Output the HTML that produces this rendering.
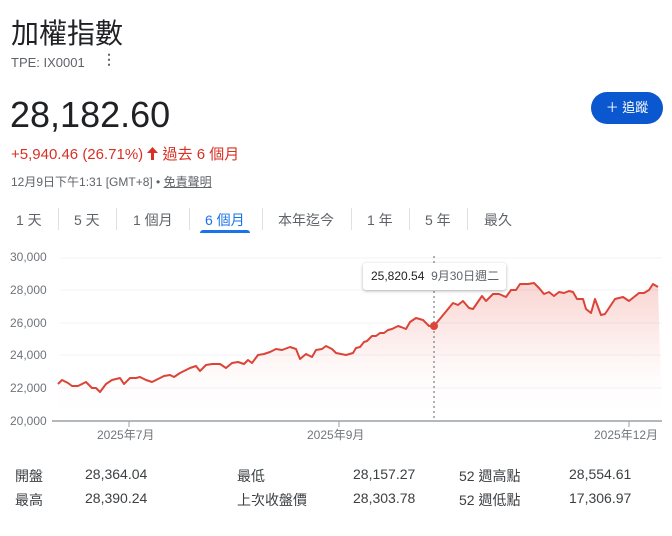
<!DOCTYPE html><html><head><meta charset="utf-8"><style>
body{margin:0;width:672px;height:536px;background:#fff;font-family:"Liberation Sans","Noto Sans CJK TC",sans-serif;color:#202124;position:relative;overflow:hidden}
.a{position:absolute;white-space:nowrap}
.tab{position:absolute;top:210px;font-size:14px;color:#5f6368}
.sep{position:absolute;top:208px;width:1px;height:22px;background:#e0e0e0}
.st{position:absolute;font-size:14px;color:#3c4043}
.yl{position:absolute;left:10px;font-size:12px;color:#70757a}
</style></head><body>
<div class="a" style="left:11px;top:12px;font-size:28px;color:#202124">加權指數</div>
<div class="a" style="left:11px;top:55px;font-size:13px;color:#5f6368">TPE: IX0001</div>
<div class="a" style="left:102px;top:54px;font-size:14px;font-weight:bold;color:#5f6368;line-height:10px">⋮</div>
<div class="a" style="left:10px;top:94px;font-size:36px;color:#202124">28,182.60</div>
<div class="a" style="left:11px;top:143px;font-size:15px;color:#d93025">+5,940.46 (26.71%) <svg width="11" height="13" viewBox="0 0 11 13" style="vertical-align:-1px"><path d="M5.5 0 L11 6 L7 6 L7 13 L4 13 L4 6 L0 6 Z" fill="#d93025"/></svg> 過去 6 個月</div>
<div class="a" style="left:11px;top:173px;font-size:12px;color:#5f6368">12月9日下午1:31 [GMT+8] • <span style="text-decoration:underline">免責聲明</span></div>
<div class="a" style="left:591px;top:92px;width:72px;height:32px;border-radius:16px;background:#0b57d0;color:#fff;font-size:13px;line-height:32px;text-align:center">＋ 追蹤</div>
<div class="tab" style="left:16px">1 天</div>
<div class="sep" style="left:58px"></div>
<div class="tab" style="left:74px">5 天</div>
<div class="sep" style="left:116px"></div>
<div class="tab" style="left:133px">1 個月</div>
<div class="sep" style="left:189px"></div>
<div class="tab" style="left:205px;color:#1a73e8">6 個月</div>
<div class="a" style="left:200px;top:230px;width:50px;height:3px;background:#1a73e8;border-radius:3px 3px 0 0"></div>
<div class="sep" style="left:262px"></div>
<div class="tab" style="left:278px">本年迄今</div>
<div class="sep" style="left:351px"></div>
<div class="tab" style="left:367px">1 年</div>
<div class="sep" style="left:409px"></div>
<div class="tab" style="left:425px">5 年</div>
<div class="sep" style="left:467px"></div>
<div class="tab" style="left:484px">最久</div>
<div class="yl" style="top:250px">30,000</div>
<div class="yl" style="top:283px">28,000</div>
<div class="yl" style="top:316px">26,000</div>
<div class="yl" style="top:348px">24,000</div>
<div class="yl" style="top:381px">22,000</div>
<div class="yl" style="top:414px">20,000</div>
<svg class="a" style="left:0;top:0" width="672" height="536">
<defs><linearGradient id="g" x1="0" y1="0" x2="0" y2="1"><stop offset="0" stop-color="#e8594d" stop-opacity="0.25"/><stop offset="0.6" stop-color="#e8594d" stop-opacity="0.04"/><stop offset="1" stop-color="#fff" stop-opacity="0"/></linearGradient></defs>
<g stroke="#f1f3f4" stroke-width="1"><line x1="60" y1="258" x2="662" y2="258"/><line x1="60" y1="290" x2="662" y2="290"/><line x1="60" y1="323" x2="662" y2="323"/><line x1="60" y1="355" x2="662" y2="355"/><line x1="60" y1="388" x2="662" y2="388"/></g>
<polygon fill="url(#g)" points="58,421 58,384 62,380 68,383 72,386 78,386 86,382 92,388 96,388 100,392 106,384 112,380 120,378 124,384 130,378 136,378 140,377 146,380 152,382 158,379 164,376 170,375 174,377 180,373 186,370 190,368 196,366 200,371 206,365 212,364 220,364 226,368 232,363 238,362 244,364 248,360 252,363 258,355 264,354 270,352 276,349 282,350 290,347 296,349 300,359 306,354 312,357 316,350 322,349 326,346 332,349 336,353 346,355 353,353 356,348 360,347 364,342 367,341 372,336 376,336 380,333 384,333 388,330 392,329 398,326 401,327 406,329 410,322 416,318 423,320 429,326 434,326 453,303 458,305 463,301 469,308 473,309 482,296 486,301 493,294 499,294 506,297 511,290 516,290 520,284 528,284 534,283 539,288 544,294 549,292 554,296 559,292 564,293 569,291 573,292 577,299 583,299 586,309 591,313 595,299 601,315 605,314 615,299 623,297 629,301 639,293 644,293 649,290 653,284 658,287 662,421"/>
<polyline fill="none" stroke="#db4437" stroke-width="2" stroke-linejoin="round" points="58,384 62,380 68,383 72,386 78,386 86,382 92,388 96,388 100,392 106,384 112,380 120,378 124,384 130,378 136,378 140,377 146,380 152,382 158,379 164,376 170,375 174,377 180,373 186,370 190,368 196,366 200,371 206,365 212,364 220,364 226,368 232,363 238,362 244,364 248,360 252,363 258,355 264,354 270,352 276,349 282,350 290,347 296,349 300,359 306,354 312,357 316,350 322,349 326,346 332,349 336,353 346,355 353,353 356,348 360,347 364,342 367,341 372,336 376,336 380,333 384,333 388,330 392,329 398,326 401,327 406,329 410,322 416,318 423,320 429,326 434,326 453,303 458,305 463,301 469,308 473,309 482,296 486,301 493,294 499,294 506,297 511,290 516,290 520,284 528,284 534,283 539,288 544,294 549,292 554,296 559,292 564,293 569,291 573,292 577,299 583,299 586,309 591,313 595,299 601,315 605,314 615,299 623,297 629,301 639,293 644,293 649,290 653,284 658,287"/>
<line x1="434" y1="256" x2="434" y2="421" stroke="#5f6368" stroke-width="1" stroke-dasharray="2,3"/>
<circle cx="434" cy="326" r="4" fill="#db4437"/>
<line x1="52" y1="421" x2="662" y2="421" stroke="#9aa0a6" stroke-width="1.5"/>
<g stroke="#9aa0a6"><line x1="129" y1="421" x2="129" y2="427"/><line x1="339" y1="421" x2="339" y2="427"/><line x1="629" y1="421" x2="629" y2="427"/></g>
</svg>
<div class="a" style="left:363px;top:263px;width:143px;height:27px;background:#fff;border-radius:3px;box-shadow:0 1px 3px rgba(0,0,0,.3);font-size:12px;line-height:27px;padding-left:8px;box-sizing:border-box"><span style="color:#202124">25,820.54</span>&nbsp; <span style="color:#5f6368">9月30日週二</span></div>
<div class="a" style="left:97px;top:426px;font-size:12px;color:#70757a">2025年7月</div>
<div class="a" style="left:307px;top:426px;font-size:12px;color:#70757a">2025年9月</div>
<div class="a" style="left:594px;top:426px;font-size:12px;color:#70757a">2025年12月</div>
<div class="st" style="left:15px;top:466px">開盤</div><div class="st" style="left:85px;top:466px">28,364.04</div>
<div class="st" style="left:237px;top:466px">最低</div><div class="st" style="left:353px;top:466px">28,157.27</div>
<div class="st" style="left:459px;top:466px">52 週高點</div><div class="st" style="left:569px;top:466px">28,554.61</div>
<div class="st" style="left:15px;top:490px">最高</div><div class="st" style="left:85px;top:490px">28,390.24</div>
<div class="st" style="left:237px;top:490px">上次收盤價</div><div class="st" style="left:353px;top:490px">28,303.78</div>
<div class="st" style="left:459px;top:490px">52 週低點</div><div class="st" style="left:569px;top:490px">17,306.97</div>
</body></html>
